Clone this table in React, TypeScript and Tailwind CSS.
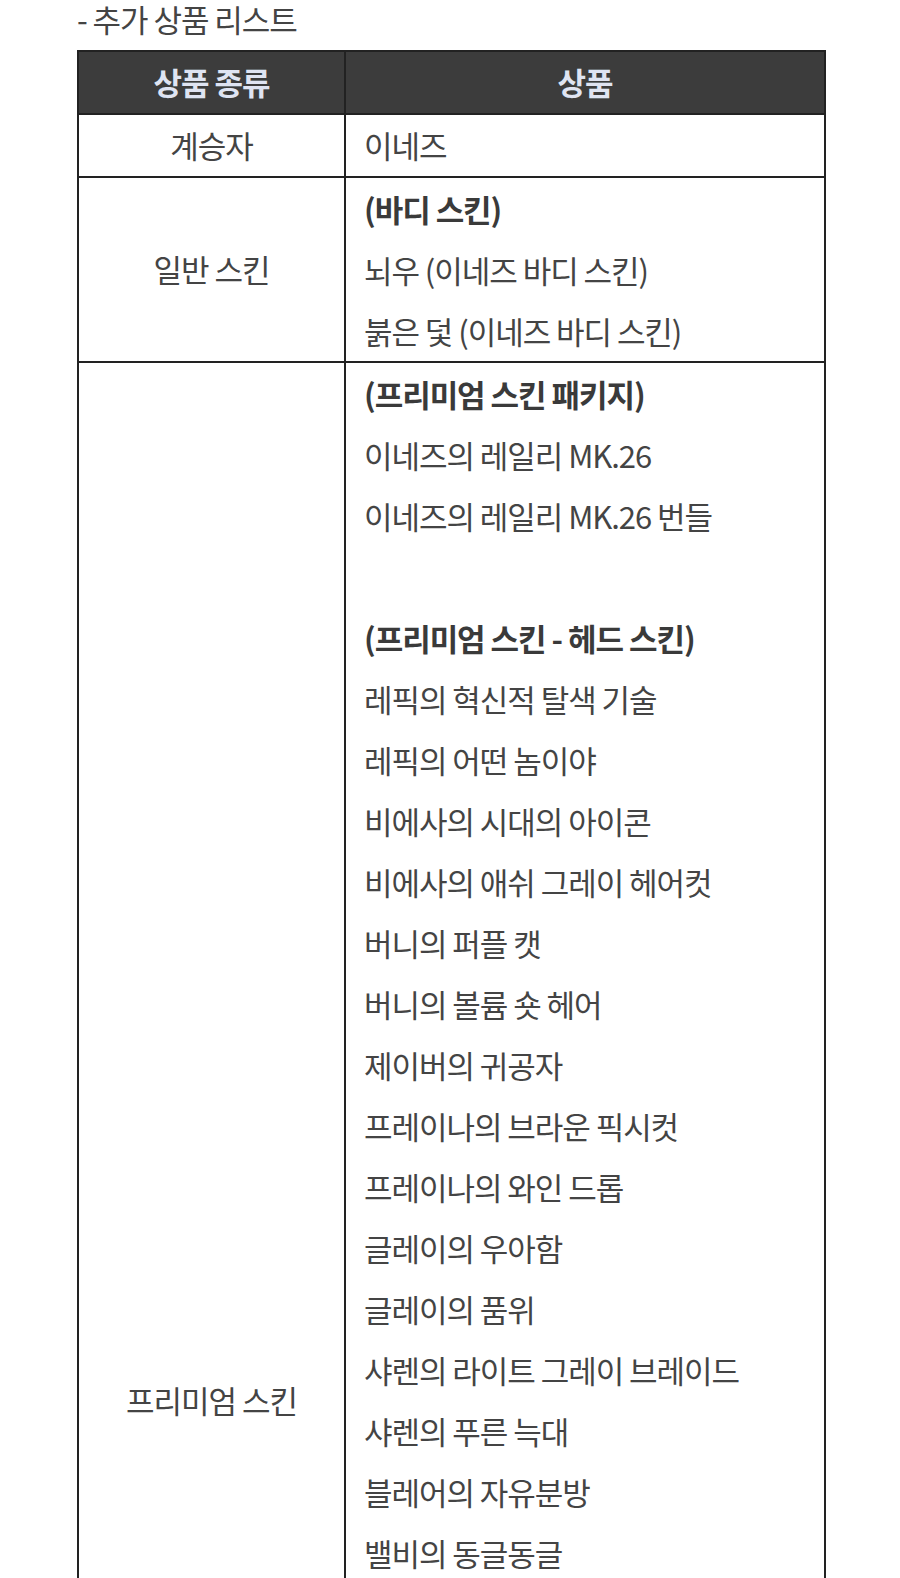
const bodySkins = ["뇌우 (이네즈 바디 스킨)", "붉은 덫 (이네즈 바디 스킨)"];

const packageItems = ["이네즈의 레일리 MK.26", "이네즈의 레일리 MK.26 번들"];

const headSkins = [
  "레픽의 혁신적 탈색 기술",
  "레픽의 어떤 놈이야",
  "비에사의 시대의 아이콘",
  "비에사의 애쉬 그레이 헤어컷",
  "버니의 퍼플 캣",
  "버니의 볼륨 숏 헤어",
  "제이버의 귀공자",
  "프레이나의 브라운 픽시컷",
  "프레이나의 와인 드롭",
  "글레이의 우아함",
  "글레이의 품위",
  "샤렌의 라이트 그레이 브레이드",
  "샤렌의 푸른 늑대",
  "블레어의 자유분방",
  "밸비의 동글동글",
];

function Line({ children, bold }: { children?: React.ReactNode; bold?: boolean }) {
  return (
    <div className={`h-[61px] leading-[61px] whitespace-nowrap ${bold ? "font-bold text-[#3a3a3a]" : ""}`}>
      {children}
    </div>
  );
}

export default function App() {
  return (
    <div
      className="min-h-screen bg-white pl-[77px] pr-[74px] text-[#444] tracking-[-0.065em]"
      style={{ fontFamily: '"Noto Sans CJK KR", "Noto Sans", sans-serif' }}
    >
      <h2 className="h-[50px] pt-[1px] leading-[36px] text-[31px] font-normal text-[#444]">- 추가 상품 리스트</h2>

      <table className="w-[749px] border-collapse text-[31px]">
        <colgroup>
          <col className="w-[267px]" />
          <col />
        </colgroup>
        <thead>
          <tr className="bg-[#3c3c3c] h-[63px]">
            <th className="border-2 border-[#222] text-center font-bold text-[#dfe4f2]">상품 종류</th>
            <th className="border-2 border-[#222] text-center font-bold text-[#dfe4f2]">상품</th>
          </tr>
        </thead>
        <tbody>
          <tr className="h-[63px]">
            <td className="border-2 border-[#222] text-center">계승자</td>
            <td className="border-2 border-[#222] px-[18px]">이네즈</td>
          </tr>
          <tr>
            <td className="border-2 border-[#222] text-center">일반 스킨</td>
            <td className="border-2 border-[#222] px-[18px] py-0">
              <Line bold>(바디 스킨)</Line>
              {bodySkins.map((item) => (
                <Line key={item}>{item}</Line>
              ))}
            </td>
          </tr>
          <tr>
            <td className="border-2 border-[#222] text-center">프리미엄 스킨</td>
            <td className="border-2 border-[#222] px-[18px] py-0">
              <Line bold>(프리미엄 스킨 패키지)</Line>
              {packageItems.map((item) => (
                <Line key={item}>{item}</Line>
              ))}
              <Line />
              <Line bold>(프리미엄 스킨 - 헤드 스킨)</Line>
              {headSkins.map((item) => (
                <Line key={item}>{item}</Line>
              ))}
              <div className="h-[854px]" />
            </td>
          </tr>
        </tbody>
      </table>
    </div>
  );
}
